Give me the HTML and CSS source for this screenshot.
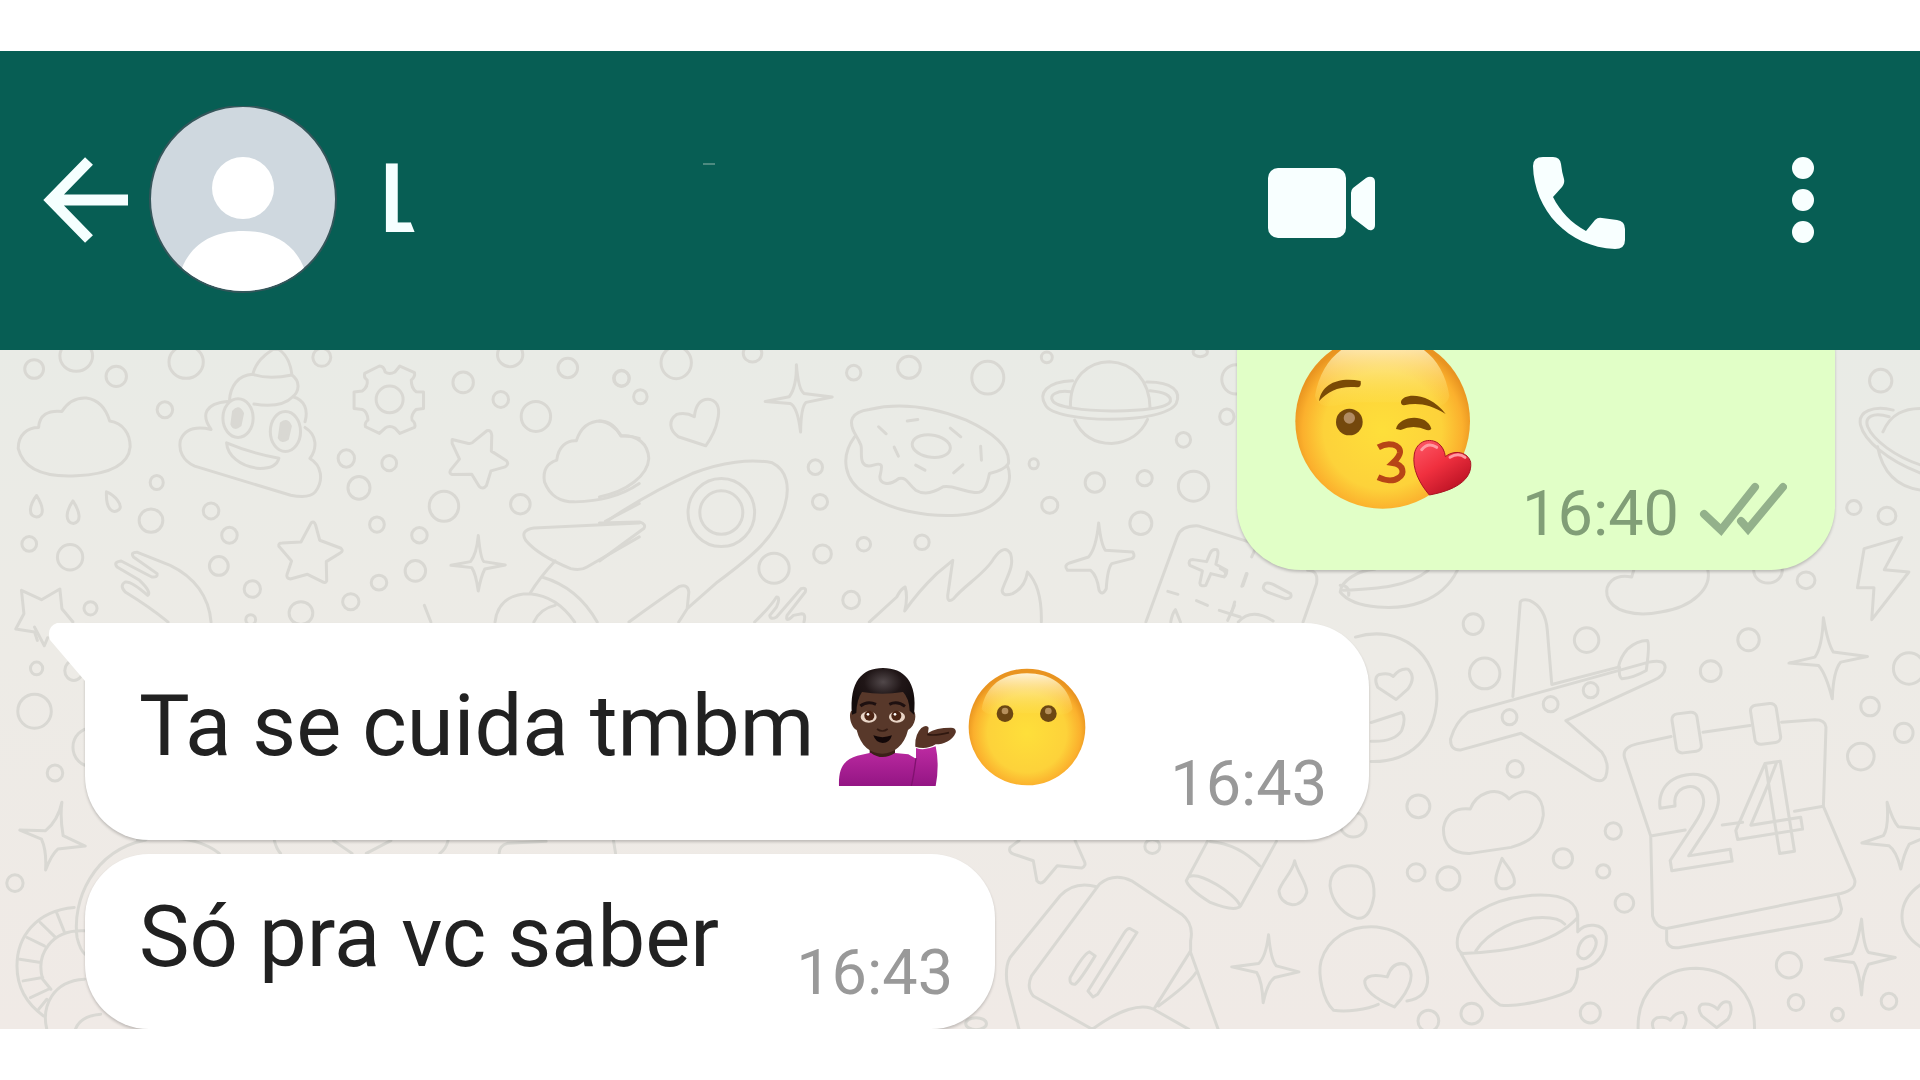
FILE: index.html
```html
<!DOCTYPE html>
<html lang="pt-BR">
<head>
<meta charset="utf-8">
<meta name="viewport" content="width=device-width, initial-scale=1">
<title>L</title>
<link rel="stylesheet" href="styles.css">
</head>
<body>
<header class="topbar">
  <button class="icon-btn" type="button" aria-label="Voltar">
    <svg width="86" height="96" viewBox="43 152 86 96"><path d="M128 200H52M89 161L51 200L89 239" fill="none" stroke="#f5ffff" stroke-width="11"/></svg>
  </button>
  <svg class="avatar" width="188" height="188" viewBox="149 106 188 188" role="img" aria-label="Foto do contato">
    <defs><clipPath id="face"><circle cx="243" cy="199" r="92"/></clipPath></defs>
    <circle cx="243" cy="199" r="93" fill="#cfd8df" stroke="#34565a" stroke-width="2"/>
    <g clip-path="url(#face)" fill="#fff">
      <circle cx="243" cy="188" r="31"/>
      <path d="M182 268C192 243 214 231 243 231S294 243 304 268V300H182Z"/>
    </g>
  </svg>
  <h1 class="name">L</h1>
  <span class="smudge"></span>
  <nav class="actions">
    <button class="icon-btn" type="button" aria-label="Chamada de vídeo">
      <svg width="108" height="96" viewBox="1269 152 108 96" fill="#f8ffff"><rect x="1269" y="168" width="78" height="70" rx="10"/><path d="M1352 193Q1352 190 1354 188L1367 178Q1370 176 1373 177Q1376 178 1376 182V225Q1376 229 1373 230Q1370 231 1367 228L1354 218Q1352 216 1352 213Z"/></svg>
    </button>
    <button class="icon-btn" type="button" aria-label="Chamada de voz">
      <svg width="92" height="96" viewBox="1533 152 92 96" overflow="visible" fill="#f8ffff"><path d="M1543 157H1553Q1560 157 1561 164Q1562 173 1564 179Q1565 183 1562 187L1553 197C1560 211 1571 223 1586 231L1595 220Q1598 217 1602 218L1617 220Q1625 221 1625 229V240Q1625 249 1615 249C1568 247 1534 210 1533 166Q1533 157 1543 157Z"/></svg>
    </button>
    <button class="icon-btn" type="button" aria-label="Mais opções">
      <svg width="32" height="96" viewBox="1782 152 32 96" fill="#f8ffff"><circle cx="1803" cy="168" r="11"/><circle cx="1803" cy="200" r="11"/><circle cx="1803" cy="232" r="11"/></svg>
    </button>
  </nav>
</header>

<main class="chat">
  <svg class="wallpaper" viewBox="0 350 1920 678" preserveAspectRatio="xMidYMid slice" aria-hidden="true">
    <!-- top left: clouds, gear, stars -->
    <g transform="matrix(.408 0 0 .3333 0 340)">
      <path d="M98 262C100 225 120 210 155 214C175 175 200 173 215 174C250 180 265 215 272 243C305 250 322 280 322 320C318 375 270 402 190 407C110 412 60 385 48 325C48 285 70 262 98 262Z"/>
      <path d="M622 103C630 65 650 45 672 28H685C708 45 715 75 718 105C690 112 650 115 622 103C585 105 567 140 565 182M718 105C740 125 735 155 720 170C700 195 665 200 625 192M720 170C750 180 758 210 750 245M750 262C780 285 780 325 762 355C790 375 797 420 775 455C765 470 745 472 715 465L480 378C450 362 440 330 445 300C455 270 480 257 520 268C495 225 505 190 560 184"/>
      <ellipse cx="586" cy="234" rx="37" ry="58"/><ellipse cx="702" cy="274" rx="37" ry="60"/>
      <path class="solid" d="M575 215q12-20 22 5l-6 35q-14 15-20-3ZM692 250q15-15 22 8l-7 38q-14 12-20-3Z"/>
      <path d="M558 308Q620 340 686 354Q680 385 640 385C590 380 560 345 558 308Z"/>
      <path d="M932 78Q943 78 946 96Q957 105 970 96L982 78L1018 98Q1020 110 1010 120Q1010 145 1022 155L1040 156V205L1022 208Q1008 225 1012 240Q1022 250 1018 262L982 280L970 264Q957 255 946 264L932 280L898 260Q895 248 904 240Q903 215 890 208L870 205V156L890 153Q905 140 902 120Q893 112 896 100Z"/>
      <ellipse cx="957" cy="178" rx="33" ry="40"/>
      <path d="M1110 298L1150 310Q1158 312 1163 304L1195 272Q1205 268 1207 285L1206 333L1243 362Q1250 372 1240 380L1205 392L1194 436Q1185 450 1176 438L1158 402L1110 403Q1102 400 1106 390L1128 357L1110 310Z"/>
      <path d="M765 548Q772 540 776 555L786 600L838 624Q845 632 836 638L802 664L803 722Q800 730 792 724L756 702L714 716Q703 714 706 702L717 662L686 618Q684 608 694 608L740 605Z"/>
      <path d="M1174 586Q1180 658 1188 664L1240 674L1190 686Q1180 710 1174 752Q1168 700 1158 682L1107 675L1155 664Q1170 640 1174 586Z"/>
      <path d="M1366 360C1370 320 1390 300 1414 302C1425 260 1445 243 1475 243C1500 245 1515 270 1523 288Q1545 285 1568 295M1366 360C1340 370 1332 395 1336 425C1350 470 1375 485 1410 485C1470 482 1520 470 1568 430"/>
      <path d="M93 466C108 495 115 528 93 530C71 528 75 495 93 466ZM182 482C198 512 205 545 183 550C160 545 166 510 182 482ZM264 455C285 465 305 495 295 508C280 522 262 510 264 455Z"/>
      <path d="M415 845Q370 800 310 755Q295 735 310 725Q325 722 365 765Q375 755 345 720L290 680Q280 665 300 662L375 710Q390 712 388 700L330 650Q322 635 340 636L420 675C480 710 515 770 520 845"/>
      <path d="M95 900L88 875L42 866L62 820L56 750L105 778L150 746L155 805L182 845"/>
      <path d="M1568 548L1310 563Q1275 570 1290 600Q1320 645 1400 685Q1425 692 1440 680L1568 590M1485 543L1568 490M1362 662Q1325 710 1300 760M1330 710C1400 735 1440 790 1465 845M1215 845C1220 790 1250 760 1300 760C1350 765 1385 800 1410 845M1310 845Q1325 805 1362 795M1042 795L1058 845"/>
      <ellipse cx="87" cy="87" rx="23" ry="28"/><ellipse cx="190" cy="48" rx="40" ry="46"/><ellipse cx="288" cy="109" rx="25" ry="30"/><ellipse cx="459" cy="66" rx="42" ry="49"/><ellipse cx="791" cy="52" rx="22" ry="27"/>
      <ellipse cx="407" cy="209" rx="19" ry="24"/><ellipse cx="387" cy="427" rx="16" ry="21"/><ellipse cx="373" cy="541" rx="29" ry="35"/><ellipse cx="520" cy="512" rx="19" ry="24"/><ellipse cx="565" cy="585" rx="19" ry="24"/>
      <ellipse cx="851" cy="355" rx="20" ry="26"/><ellipse cx="956" cy="369" rx="18" ry="23"/><ellipse cx="882" cy="443" rx="27" ry="34"/><ellipse cx="1137" cy="127" rx="25" ry="31"/><ellipse cx="1229" cy="178" rx="19" ry="24"/>
      <ellipse cx="1315" cy="229" rx="36" ry="45"/><ellipse cx="1252" cy="44" rx="31" ry="36"/><ellipse cx="1393" cy="84" rx="24" ry="29"/><ellipse cx="1524" cy="115" rx="19" ry="24"/><ellipse cx="1090" cy="498" rx="36" ry="45"/>
      <ellipse cx="1277" cy="492" rx="24" ry="29"/><ellipse cx="926" cy="553" rx="18" ry="23"/><ellipse cx="1030" cy="585" rx="19" ry="23"/><ellipse cx="1020" cy="692" rx="25" ry="31"/><ellipse cx="931" cy="727" rx="19" ry="22"/>
      <ellipse cx="862" cy="784" rx="20" ry="24"/><ellipse cx="740" cy="818" rx="29" ry="34"/><ellipse cx="621" cy="746" rx="20" ry="25"/><ellipse cx="539" cy="677" rx="23" ry="28"/><ellipse cx="75" cy="611" rx="18" ry="22"/>
      <ellipse cx="175" cy="651" rx="31" ry="38"/><ellipse cx="225" cy="804" rx="16" ry="20"/><ellipse cx="617" cy="838" rx="12" ry="15"/>
    </g>
    <!-- top middle: rocket, donut, planet, flames -->
    <g transform="matrix(.421 0 0 .3333 600 340)">
      <path d="M0 243C25 245 40 265 52 287C90 285 115 310 117 355C115 405 65 455 0 470"/>
      <path d="M15 545Q120 455 220 400C290 365 360 355 410 368C445 390 452 440 440 495C420 590 360 650 280 725L208 805L188 845M70 845Q135 785 190 738Q210 730 212 755L208 805M0 548L95 545Q112 552 105 565L0 662"/>
      <ellipse cx="289" cy="517" rx="79" ry="102"/><ellipse cx="289" cy="517" rx="51" ry="65"/>
      <path d="M252 317L187 290C165 270 163 240 183 223Q205 215 225 230C228 195 240 175 262 178C285 185 285 215 280 240C275 275 262 300 252 317Z"/>
      <path d="M467 74Q472 150 485 160L552 171L490 187Q478 200 477 276Q470 200 452 190L393 184L450 170Q468 140 467 74Z"/>
      <path d="M610 290C585 240 600 215 640 208C720 185 800 205 870 240C930 275 975 320 970 370Q960 390 925 400C920 430 915 460 890 457C850 450 840 435 815 440C790 460 770 465 750 450C730 430 730 410 710 415C685 440 665 430 665 410C670 380 675 365 650 375C610 390 625 330 620 315Q615 300 610 290M605 290C570 350 580 420 630 460C690 510 770 530 850 525C940 520 990 440 967 375"/>
      <ellipse cx="787" cy="318" rx="46" ry="33" transform="rotate(15 787 318)"/>
      <path d="M662 260L680 281M730 243L755 238M832 264L857 290M904 318L906 360M862 374L840 398M750 375L772 390M699 321L709 348"/>
      <path d="M1117 203C1115 110 1160 65 1210 65C1265 68 1305 120 1306 205M1127 240C1145 290 1175 310 1215 310C1255 307 1285 280 1300 238M1122 122C1060 125 1040 160 1058 195C1080 250 1340 255 1368 190C1380 155 1360 125 1298 126M1117 155C1085 150 1065 165 1075 182C1090 220 1340 225 1354 184Q1358 158 1306 152"/>
      <path d="M1184 548Q1190 615 1200 630L1265 635Q1272 650 1262 655L1215 670Q1205 685 1202 745Q1192 768 1185 750Q1180 705 1165 690L1110 690Q1100 675 1115 668L1160 650Q1178 625 1184 548Z"/>
      <path d="M640 845L705 770Q715 745 725 740Q732 770 724 812Q755 755 800 700L838 660L826 765Q825 790 840 775C865 735 915 700 935 655Q960 610 975 640C985 680 965 710 955 750Q955 770 980 760Q1010 740 1015 695Q1050 740 1048 845"/>
      <path d="M368 845Q405 800 420 770Q430 770 420 800L404 825Q405 840 420 830L478 745Q492 740 488 755L445 825Q440 850 460 825L480 820Q490 820 485 845"/>
      <path d="M1296 845L1370 590Q1380 555 1420 557L1540 605M1355 845Q1358 820 1366 808L1378 845M1348 753L1372 762M1416 781L1442 795M1536 700L1526 736M1470 810L1520 830M1506 795L1490 840"/>
      <path d="M1460 628Q1470 625 1466 650L1462 672L1488 690Q1488 712 1475 708L1450 700L1438 735Q1425 740 1424 728L1430 692L1400 675Q1395 658 1408 658L1440 664L1448 640Q1452 628 1460 628Z"/>
      <ellipse cx="182" cy="68" rx="36" ry="48"/><ellipse cx="53" cy="115" rx="18" ry="23"/><ellipse cx="97" cy="170" rx="16" ry="21"/><ellipse cx="363" cy="40" rx="22" ry="26"/><ellipse cx="603" cy="98" rx="17" ry="22"/>
      <ellipse cx="734" cy="82" rx="27" ry="33"/><ellipse cx="921" cy="113" rx="38" ry="49"/><ellipse cx="1061" cy="52" rx="13" ry="16"/><ellipse cx="512" cy="381" rx="17" ry="22"/><ellipse cx="523" cy="485" rx="18" ry="22"/>
      <ellipse cx="414" cy="684" rx="36" ry="45"/><ellipse cx="529" cy="641" rx="21" ry="27"/><ellipse cx="627" cy="612" rx="16" ry="20"/><ellipse cx="765" cy="606" rx="17" ry="22"/><ellipse cx="597" cy="779" rx="20" ry="26"/>
      <ellipse cx="1030" cy="371" rx="11" ry="15"/><ellipse cx="1068" cy="495" rx="19" ry="24"/><ellipse cx="1175" cy="427" rx="23" ry="29"/><ellipse cx="1293" cy="414" rx="18" ry="23"/><ellipse cx="1409" cy="438" rx="36" ry="45"/>
      <ellipse cx="1284" cy="549" rx="26" ry="34"/><ellipse cx="1385" cy="299" rx="17" ry="22"/><ellipse cx="1488" cy="230" rx="17" ry="23"/><ellipse cx="1510" cy="118" rx="34" ry="44"/><ellipse cx="1425" cy="36" rx="17" ry="14"/>
    </g>
    <!-- top right: ringed planet, die, leaf, bolt -->
    <g transform="matrix(.4464 0 0 .3333 1220 340)">
      <path d="M1568 205C1530 205 1500 220 1482 275M1505 210C1460 195 1425 215 1432 255C1440 300 1490 360 1568 400M1496 230C1460 215 1440 230 1448 260C1460 300 1510 350 1568 375M1470 320C1480 390 1510 440 1568 450"/>
      <path d="M70 650L80 620M195 690Q220 690 215 730L185 845M48 738L58 700M24 822L32 785M40 845Q70 800 118 842M100 730Q90 745 105 755L145 775Q162 775 157 760L118 732Q105 725 100 730M0 685Q18 695 8 710"/>
      <path d="M345 687C310 690 270 720 268 755C300 810 400 810 450 785C490 765 515 730 530 690M275 750C350 745 420 740 465 690M268 735Q290 735 287 765"/>
      <path d="M920 710C880 700 860 730 865 765C875 815 930 830 985 815C1060 800 1100 740 1090 687M920 710L925 688"/>
      <path d="M1524 592L1440 625L1425 742L1462 742L1457 838L1540 695L1485 688Z"/>
      <ellipse cx="1477" cy="122" rx="25" ry="34"/><ellipse cx="1417" cy="502" rx="16" ry="21"/><ellipse cx="1491" cy="527" rx="20" ry="26"/><ellipse cx="1225" cy="690" rx="32" ry="38"/><ellipse cx="1310" cy="720" rx="20" ry="25"/>
    </g>
    <!-- right: plane, calendar, cup, smileys -->
    <g transform="matrix(.37 0 0 .3333 1340 560)">
      <path d="M40 230C160 190 262 280 260 415C255 530 190 605 83 603M150 417L100 380Q88 350 105 342Q130 335 142 348Q160 322 182 326Q205 350 182 385ZM83 486L165 456Q178 470 165 510Q145 545 83 542"/>
      <path d="M465 408L485 125Q490 115 510 120C540 135 555 165 558 210L570 372L750 320Q755 290 775 265Q800 240 828 240Q835 250 825 330Q790 352 760 355Q750 350 753 320M832 305Q875 295 876 320Q875 345 845 360L608 480L705 575Q728 610 715 650Q705 668 680 655L487 518L325 568Q295 570 297 535Q310 485 345 455Z"/>
      <path d="M350 745C365 700 420 670 455 715C500 670 550 700 547 765C540 820 510 845 460 860L350 878C300 880 275 850 278 800C285 760 310 740 350 745ZM436 893C450 920 475 945 468 970Q450 990 430 982C410 965 420 940 436 893Z"/>
      <path d="M1303 172Q1315 250 1330 275L1422 288L1350 305Q1330 330 1327 415Q1310 340 1290 315L1210 308L1280 290Q1300 260 1303 172ZM1475 725Q1490 780 1505 798L1568 805M1475 725Q1480 800 1465 825L1407 847L1480 855Q1500 870 1512 925Q1520 880 1535 850L1568 835M1406 1075Q1412 1160 1425 1175L1497 1190L1425 1210Q1408 1240 1406 1302Q1400 1230 1385 1205L1308 1195L1380 1178Q1395 1150 1406 1075Z"/>
      <path d="M892 528L800 550Q760 560 766 590L837 826L842 1065Q850 1100 880 1103L1350 998Q1395 985 1387 955L1303 737L1310 500Q1308 478 1280 478L1190 485M978 515L1105 495M837 826L930 808M1030 793L1085 785M1225 752L1303 737M880 1103V1140Q885 1165 915 1160L1320 1080Q1350 1070 1352 1045L1342 1000"/>
      <rect x="900" y="457" width="68" height="118" rx="16" transform="rotate(-8 934 516)"/><rect x="1112" y="431" width="70" height="118" rx="16" transform="rotate(-8 1147 490)"/>
      <path d="M315 1150C310 1080 400 1005 540 1003C610 1003 640 1030 640 1070Q560 1170 330 1178Q315 1170 315 1150M365 1170C400 1110 480 1070 545 1070Q590 1070 605 1090M325 1178C360 1250 395 1310 430 1332C480 1340 570 1315 620 1290Q640 1270 640 1225C690 1220 720 1180 717 1125C710 1085 660 1085 640 1113V1060M640 1180C640 1150 655 1125 680 1125Q700 1140 680 1175Q655 1210 640 1180"/>
      <path d="M803 1405C800 1290 870 1222 960 1222C1060 1225 1120 1310 1117 1405M845 1405Q835 1380 855 1370Q880 1365 890 1378Q905 1352 925 1355Q940 1375 925 1405M1015 1400L975 1365Q960 1340 975 1330Q1000 1325 1018 1345Q1030 1315 1050 1325Q1060 1350 1045 1375ZM1568 970C1500 1020 1495 1110 1568 1160"/>
      <ellipse cx="358" cy="191" rx="27" ry="31"/><ellipse cx="389" cy="339" rx="41" ry="46"/><ellipse cx="664" cy="239" rx="33" ry="37"/><ellipse cx="675" cy="389" rx="20" ry="23"/><ellipse cx="567" cy="431" rx="20" ry="23"/>
      <ellipse cx="456" cy="470" rx="20" ry="23"/><ellipse cx="471" cy="625" rx="22" ry="25"/><ellipse cx="1101" cy="238" rx="29" ry="33"/><ellipse cx="999" cy="332" rx="28" ry="31"/><ellipse cx="1534" cy="324" rx="42" ry="47"/>
      <ellipse cx="1429" cy="438" rx="25" ry="28"/><ellipse cx="1520" cy="517" rx="25" ry="29"/><ellipse cx="1404" cy="588" rx="36" ry="40"/><ellipse cx="210" cy="737" rx="31" ry="34"/><ellipse cx="736" cy="811" rx="22" ry="25"/>
      <ellipse cx="600" cy="893" rx="26" ry="29"/><ellipse cx="709" cy="932" rx="18" ry="20"/><ellipse cx="766" cy="1027" rx="25" ry="27"/><ellipse cx="204" cy="935" rx="24" ry="26"/><ellipse cx="291" cy="953" rx="31" ry="35"/>
      <ellipse cx="1210" cy="1213" rx="34" ry="38"/><ellipse cx="1229" cy="1325" rx="21" ry="24"/><ellipse cx="1341" cy="1361" rx="16" ry="19"/><ellipse cx="1480" cy="1321" rx="21" ry="24"/><ellipse cx="354" cy="1358" rx="29" ry="31"/>
      <ellipse cx="674" cy="1356" rx="27" ry="30"/><ellipse cx="237" cy="1380" rx="28" ry="32"/>
    </g>
    <text class="date" x="1664" y="871" transform="rotate(-9 1664 871)">24</text>
    <!-- bottom middle: book, tube, star -->
    <g transform="matrix(.357 0 0 .3333 960 800)">
      <path d="M165 120L140 140Q135 155 150 160L205 180L215 240Q225 252 235 242L272 195L340 202Q355 195 347 180L322 120"/>
      <path d="M692 122L633 240Q640 265 700 305Q770 335 785 315L885 122M700 122Q780 130 838 195M640 228C670 210 770 280 782 312"/>
      <path d="M936 180C945 220 970 245 970 275Q960 312 930 312Q895 305 892 270C900 240 930 215 936 180Z"/>
      <path d="M1035 255C1035 215 1060 195 1095 195C1140 195 1160 230 1158 285C1150 340 1130 355 1110 352C1080 345 1040 310 1035 255Z"/>
      <path d="M200 525Q185 560 205 585L370 685M200 525L390 250Q430 215 480 240L620 340Q655 370 645 420V450L545 620M382 258Q320 240 280 285L140 470Q125 500 132 550L165 685M645 455L722 685M660 515Q640 550 555 615M370 685C440 630 510 600 550 630L640 685M495 395L475 383Q468 382 460 395L358 570L372 588L385 580ZM378 465L362 453Q345 460 308 530Q305 552 322 550Q335 540 378 465Z"/>
      <path d="M863 402Q870 480 885 495L948 513L880 530Q860 545 848 605Q845 540 830 515L760 498L835 488Q855 470 863 402Z"/>
      <path d="M1170 610C1140 625 1080 635 1045 628C1015 600 1000 520 1010 480C1030 410 1090 378 1150 378C1240 380 1300 450 1308 530Q1310 590 1250 600M1215 618Q1130 580 1132 540Q1140 515 1195 528Q1210 480 1245 490C1275 510 1265 560 1215 618Z"/>
      <ellipse cx="538" cy="137" rx="21" ry="21"/><ellipse cx="1100" cy="72" rx="36" ry="37"/><ellipse cx="45" cy="668" rx="29" ry="18"/>
    </g>
    <!-- left edge and the strip between the two messages -->
    <g transform="matrix(.408 0 0 .3333 0 600)">
      <path d="M155 605Q150 650 158 705L212 736L145 745Q130 760 115 808Q118 750 105 715L52 688L115 690Q145 660 155 605ZM88 80L112 136L120 112"/>
      <path d="M360 718C230 750 180 900 192 1010Q200 1050 212 1060M340 718C440 700 500 720 540 758M185 920C90 930 45 1010 45 1095C45 1160 70 1210 110 1245M210 990C130 985 90 1060 108 1135L128 1165M118 1285C105 1220 130 1140 210 1135M188 1285Q200 1245 250 1240M52 1075L103 1085M70 1010L112 1035M102 965L138 1008M142 935L160 990M60 1140L108 1130M78 1190L122 1165M95 1230L118 1195"/>
      <path d="M675 720Q680 745 690 758M820 720L865 758M960 720L900 758M1100 720Q1095 745 1080 758M1225 758Q1225 735 1245 728L1340 722M1510 758L1505 720"/>
      <ellipse cx="93" cy="204" rx="15" ry="19"/><ellipse cx="88" cy="332" rx="41" ry="51"/><ellipse cx="138" cy="517" rx="19" ry="24"/><ellipse cx="40" cy="847" rx="20" ry="25"/><ellipse cx="184" cy="210" rx="22" ry="30"/><ellipse cx="228" cy="440" rx="46" ry="58"/>
    </g>
  </svg>

  <article class="msg out">
    <svg class="emoji-big" width="177" height="175" viewBox="45 -20 531 525" role="img" aria-label="😘">
      <defs>
        <radialGradient id="skin" cx=".5" cy=".55" r=".52"><stop offset="0" stop-color="#fedf3a"/><stop offset=".65" stop-color="#fdd23a"/><stop offset=".88" stop-color="#fbb02d"/><stop offset="1" stop-color="#e99420"/></radialGradient>
        <linearGradient id="shine" x2="0" y2="1"><stop offset="0" stop-color="#fff3d6"/><stop offset="1" stop-color="#fde65c" stop-opacity=".1"/></linearGradient>
        <linearGradient id="love" x2=".7" y2="1"><stop offset="0" stop-color="#ff5a68"/><stop offset=".5" stop-color="#f0303f"/><stop offset="1" stop-color="#b81022"/></linearGradient>
      </defs>
      <circle cx="308" cy="242" r="262" fill="url(#skin)"/>
      <path d="M105 165C125 50 205-10 308-10S490 50 508 165Q500 215 400 185H210Q115 215 105 165Z" fill="url(#shine)"/>
      <path d="M117 182C125 130 175 108 242 121Q245 140 232 140C180 135 145 150 117 182ZM363 183C370 155 450 155 497 220C450 190 410 185 372 194Q362 192 363 183ZM348 265C355 225 440 215 454 264Q450 270 440 268Q400 250 362 268Z" fill="#7a4a05"/>
      <ellipse cx="208" cy="244" rx="40" ry="40" fill="#74480c"/><ellipse cx="208" cy="232" rx="17" ry="17" fill="#b18b62"/>
      <path d="M295 320C325 302 362 312 360 335C358 350 345 360 338 367C372 372 375 400 355 412C340 423 315 420 294 410" fill="none" stroke="#b74516" stroke-width="18"/>
      <path d="M448 463C420 430 395 385 403 340C410 300 450 290 475 308Q493 322 496 348C525 325 565 335 572 365C578 420 520 450 448 463Z" fill="url(#love)" stroke="#a91524" stroke-width="3"/>
      <path d="M425 327Q445 303 470 320M510 350Q535 335 555 350" fill="none" stroke="#ff9ba3" stroke-width="9" stroke-linecap="round"/>
    </svg>
    <time class="time">16:40</time>
    <svg class="ticks" width="88" height="54" viewBox="1700 481 88 54" role="img" aria-label="Entregue"><path d="M1705 513L1722 529L1756 486M1742 520L1749 528L1784 486" fill="none" stroke="#93b18b" stroke-width="8" stroke-linecap="round"/></svg>
  </article>

  <article class="msg in first">
    <svg class="tail" width="60" height="62" viewBox="0 0 60 62" aria-hidden="true"><path d="M60 0H9Q-2 4 2 17L37 58V62H60Z" fill="#fff"/></svg>
    <p class="text">Ta se cuida tmbm</p>
    <svg class="emoji" width="118" height="118" viewBox="57 50 354 354" role="img" aria-label="💁🏿‍♂️">
      <defs>
        <linearGradient id="shirt" x2="0" y2="1"><stop offset="0" stop-color="#bd2ba2"/><stop offset="1" stop-color="#941584"/></linearGradient>
        <radialGradient id="hair" cx=".5" cy=".3" r=".6"><stop offset="0" stop-color="#51484a"/><stop offset=".5" stop-color="#201617"/><stop offset="1" stop-color="#140c0c"/></radialGradient>
      </defs>
      <path d="M152 265H228V318Q190 340 152 318Z" fill="#3b2018"/>
      <path d="M60 404C58 350 75 325 115 313L155 304Q190 330 228 305L268 309L291 322V290Q315 299 350 285Q362 340 350 404Z" fill="url(#shirt)"/>
      <path d="M291 320Q285 370 277 404" fill="none" stroke="#80126f" stroke-width="4"/>
      <path d="M99 178C88 180 92 225 113 236C125 285 155 307 190 307S256 282 267 236C291 222 294 185 283 178L268 105H116Z" fill="#58382a"/>
      <path d="M99 190C90 90 130 50 192 50S297 90 285 190L272 178Q270 140 252 122Q190 132 129 122Q113 145 112 185Z" fill="url(#hair)"/>
      <path d="M124 164Q145 147 171 159M211 159Q235 147 258 165" fill="none" stroke="#1e1010" stroke-width="9"/>
      <ellipse cx="149" cy="197" rx="24" ry="17" fill="#ead6c8"/><ellipse cx="234" cy="197" rx="24" ry="17" fill="#ead6c8"/>
      <circle cx="151" cy="193" r="15" fill="#4b2414"/><circle cx="232" cy="193" r="15" fill="#4b2414"/><circle cx="147" cy="189" r="4" fill="#fff"/><circle cx="228" cy="189" r="4" fill="#fff"/>
      <path d="M174 233Q190 245 206 233" fill="none" stroke="#331b13" stroke-width="5"/>
      <path d="M163 252Q190 263 219 252Q212 275 191 275Q170 274 163 252Z" fill="#120708"/>
      <path d="M289 286Q287 250 307 230Q323 218 329 229L327 245Q350 229 396 229Q413 230 410 244C399 269 375 278 350 279Q320 297 289 286Z" fill="#573426"/>
      <path d="M325 249Q345 255 390 244" fill="none" stroke="#2f1810" stroke-width="5"/>
    </svg>
    <svg class="emoji" width="118" height="118" viewBox="446 52 354 354" role="img" aria-label="😶">
      <circle cx="623" cy="229" r="175" fill="url(#skin)"/>
      <path d="M487 175C500 100 555 68 623 68S747 100 760 175Q745 200 690 188H560Q500 200 487 175Z" fill="url(#shine)"/>
      <circle cx="557" cy="189" r="25" fill="#6c4713"/><circle cx="687" cy="189" r="25" fill="#6c4713"/><circle cx="557" cy="181" r="10" fill="#b6905c"/><circle cx="687" cy="181" r="10" fill="#b6905c"/>
    </svg>
    <time class="time">16:43</time>
  </article>

  <article class="msg in">
    <p class="text">Só pra vc saber</p>
    <time class="time">16:43</time>
  </article>
</main>
</body>
</html>
```

FILE: styles.css
```css
* {
  box-sizing: border-box;
}
body {
  margin: 0;
  height: 100vh;
  padding: 51px 0;
  display: flex;
  flex-direction: column;
  background: #fff;
  font-family: Roboto, "Liberation Sans", sans-serif;
}
svg {
  display: block;
  flex: none;
}

.topbar {
  display: flex;
  align-items: center;
  flex: none;
  padding: 55px 106px 56px 43px;
  background: #075e54;
  z-index: 1;
}
.icon-btn {
  padding: 0;
  border: 0;
  background: none;
  cursor: pointer;
}
.avatar {
  margin: 0 42px 0 20px;
}
.name {
  margin: 0 0 2px;
  font-size: 96px;
  line-height: 112px;
  font-weight: 500;
  color: #f5ffff;
  /* cut the foot of the letter */
  clip-path: polygon(0 0, 32px 0, 32px 80px, 40px 100px, 0 100px);
}
/* what is left of the erased name */
.smudge {
  width: 12px;
  height: 2px;
  margin: 0 0 72px 272px;
  background: #4d8a80;
}
.actions {
  display: flex;
  gap: 157px;
  margin-left: auto;
}

.chat {
  position: relative;
  flex: 1;
  min-height: 0;
  display: flex;
  flex-direction: column;
  justify-content: flex-end;
  gap: 14px;
  padding: 0 85px;
  overflow: hidden;
  background: linear-gradient(#e9ebe6, #edebe6 45%, #f0eae6);
}
.wallpaper {
  position: absolute;
  inset: 0;
  width: 100%;
  height: 100%;
  fill: none;
  stroke: #d9d8d3;
  stroke-width: 3px;
  stroke-linejoin: round;
  stroke-linecap: round;
}
.wallpaper * {
  vector-effect: non-scaling-stroke;
}
.wallpaper .solid {
  fill: #d9d8d3;
}
.wallpaper .date {
  font-family: Roboto, sans-serif;
  font-size: 128px;
  font-weight: 500;
}

.msg {
  position: relative;
  display: flex;
  align-items: flex-end;
  flex: none;
  border-radius: 64px;
  padding: 0 42px 20px 54px;
  background: #fff;
  box-shadow: 0 2px 3px #0003;
}
.in {
  align-self: flex-start;
}
.out {
  align-self: flex-end;
  height: 280px;
  margin-bottom: 39px;
  padding: 0 48px 20px 58px;
  background: #e1ffc7;
}
.first {
  height: 217px;
  border-top-left-radius: 0;
}
.tail {
  position: absolute;
  top: 0;
  left: -37px;
}
.text {
  margin: 0 0 22px;
  font-size: 85px;
  line-height: 100px;
  color: #212121;
}
.first .text {
  margin: 0 24px 44px 0;
}
.in:last-child {
  height: 175px;
}
.time {
  margin-bottom: 6px;
  font-size: 63px;
  line-height: 60px;
  color: #999;
}
.emoji {
  margin: 0 12px 34px 0;
}
.emoji + .time {
  margin-left: 72px;
}
.text + .time {
  margin-left: 77px;
}
.emoji-big {
  margin: 0 50px 41px 0;
}
.out .time {
  margin-right: 20px;
  color: #819e77;
}
.ticks {
  margin-bottom: 14px;
}
```
